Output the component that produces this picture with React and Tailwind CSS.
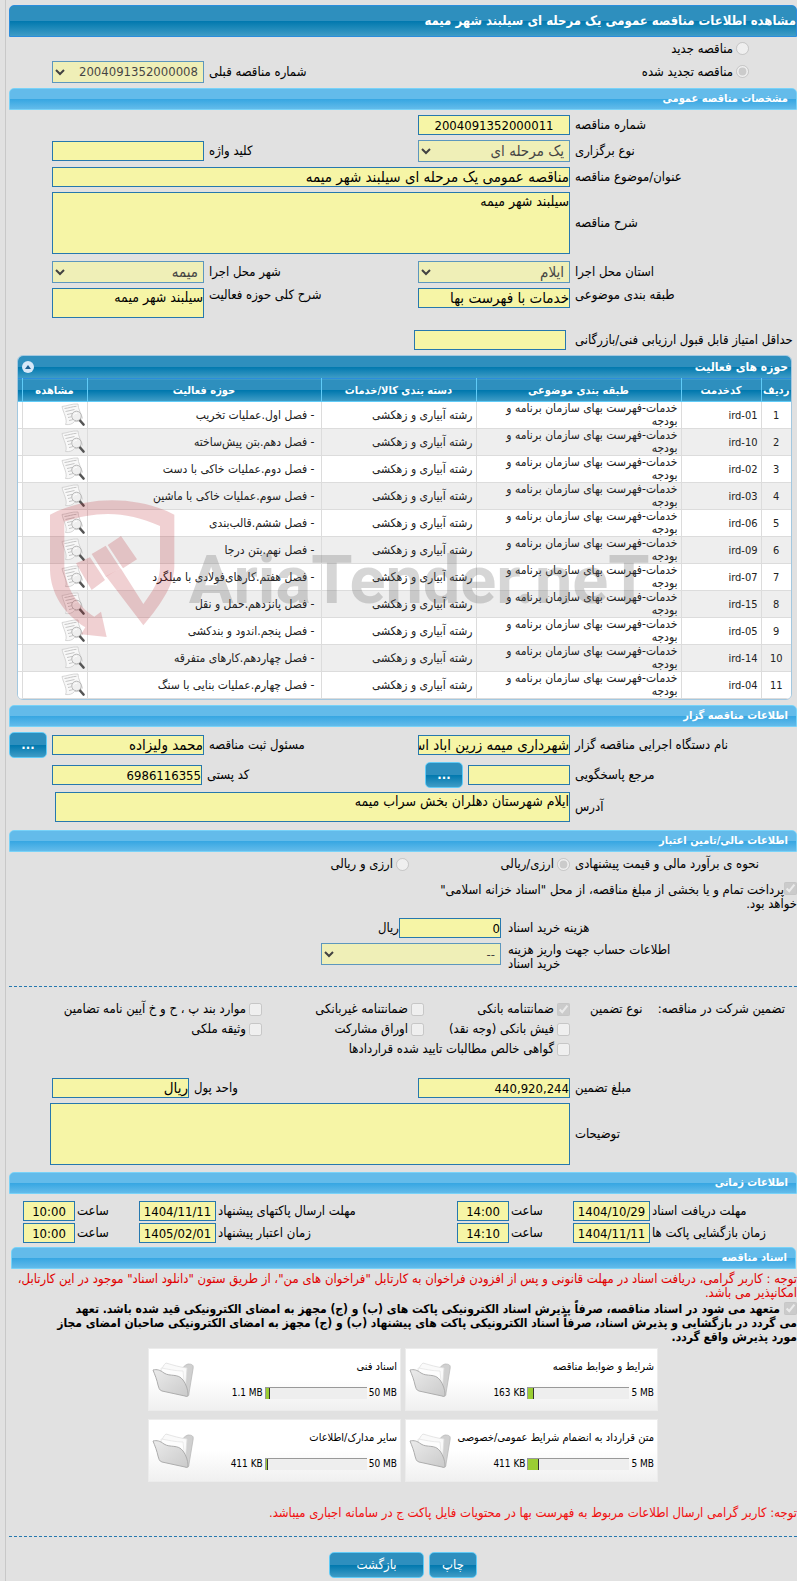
import React from "react";
import clsx from "clsx";

const activities = [
  { code: "ird-01", field: "- فصل اول.عملیات تخریب" },
  { code: "ird-10", field: "- فصل دهم.بتن پیش‌ساخته" },
  { code: "ird-02", field: "- فصل دوم.عملیات خاکی با دست" },
  { code: "ird-03", field: "- فصل سوم.عملیات خاکی با ماشین" },
  { code: "ird-06", field: "- فصل ششم.قالب‌بندی" },
  { code: "ird-09", field: "- فصل نهم.بتن درجا" },
  { code: "ird-07", field: "- فصل هفتم.کارهای‌فولادی با میلگرد" },
  { code: "ird-15", field: "- فصل پانزدهم.حمل و نقل" },
  { code: "ird-05", field: "- فصل پنجم.اندود و بندکشی" },
  { code: "ird-14", field: "- فصل چهاردهم.کارهای متفرقه" },
  { code: "ird-04", field: "- فصل چهارم.عملیات بنایی با سنگ" },
];

const documents = [
  { title: "شرایط و ضوابط مناقصه", used: "163 KB", max: "5 MB", percent: 5 },
  { title: "اسناد فنی", used: "1.1 MB", max: "50 MB", percent: 4 },
  { title: "متن قرارداد به انضمام شرایط عمومی/خصوصی", used: "411 KB", max: "5 MB", percent: 10 },
  { title: "سایر مدارک/اطلاعات", used: "411 KB", max: "50 MB", percent: 2 },
];

const guarantees = [
  [
    { id: "g-bank", label: "ضمانتنامه بانکی", checked: true },
    { id: "g-nonbank", label: "ضمانتنامه غیربانکی" },
    { id: "g-other", label: "موارد بند پ ، ح و خ آیین نامه تضامین" },
  ],
  [
    { id: "g-cash", label: "فیش بانکی (وجه نقد)" },
    { id: "g-bonds", label: "اوراق مشارکت" },
    { id: "g-estate", label: "وثیقه ملکی" },
  ],
  [{ id: "g-claims", label: "گواهی خالص مطالبات تایید شده قراردادها" }],
];

const dates = [
  ["مهلت دریافت اسناد", "1404/10/29", "14:00", "مهلت ارسال پاکتهای پیشنهاد", "1404/11/11", "10:00"],
  ["زمان بازگشایی پاکت ها", "1404/11/11", "14:10", "زمان اعتبار پیشنهاد", "1405/02/01", "10:00"],
];

const darkBar = "bg-[linear-gradient(#2e8fbe_50%,#0078ae_50%,#3f9cc6)]";
const lightBar = "bg-[linear-gradient(#63bbea_50%,#36a6e2_50%,#63bbea)]";

function Section({ title, className }) {
  return (
    <h2
      className={clsx(
        "flex h-[22px] items-center rounded-t-[5px] border border-[#78d2f8] pr-2 text-[11px] leading-[14px] font-bold text-white",
        lightBar,
        className
      )}
    >
      {title}
    </h2>
  );
}

// words are set larger than numbers
function Box({ className, words, ...props }) {
  return (
    <input
      type="text"
      readOnly
      className={clsx(
        "h-5 min-w-0 border border-[#2678ae] bg-[#f6f5a6] leading-[16px]",
        words ? "text-[15px]" : "text-[13px]",
        className
      )}
      {...props}
    />
  );
}

function Area({ className, ...props }) {
  return (
    <textarea
      readOnly
      className={clsx(
        "block min-w-0 resize-none border border-[#2678ae] bg-[#f6f5a6] text-sm leading-[16px]",
        className
      )}
      {...props}
    />
  );
}

function Dropdown({ id, value, className, words }) {
  return (
    <select
      id={id}
      disabled
      className={clsx(
        "h-[22px] shrink-0 border border-[#2678ae] bg-[#f6f5a6] px-px leading-[16px] opacity-70",
        words ? "text-[15px]" : "text-[13px]",
        className
      )}
    >
      <option>{value}</option>
    </select>
  );
}

function Row({ children, tail = "w-[38px]", className }) {
  return (
    <div className={clsx("flex items-center gap-[5px]", className)}>
      {children}
      <div className={clsx("shrink-0", tail)} />
    </div>
  );
}

function MainLabel({ htmlFor, children }) {
  return (
    <label htmlFor={htmlFor} className="w-[222px] shrink-0 text-left">
      {children}
    </label>
  );
}

function SideLabel({ htmlFor, children }) {
  return (
    <label htmlFor={htmlFor} className="min-w-0 flex-1 text-left">
      {children}
    </label>
  );
}

function BlueButton({ children, className, ...props }) {
  return (
    <button
      type="button"
      className={clsx(
        "h-[26px] shrink-0 rounded-[5px] border border-[#60cbf7] text-[13px] leading-[16px] text-white",
        darkBar,
        className
      )}
      {...props}
    >
      {children}
    </button>
  );
}

function Choice({ type = "checkbox", id, name, label, checked, className }) {
  return (
    <div className={clsx("flex items-center gap-[3px]", className)}>
      <input
        type={type}
        id={id}
        name={name}
        disabled
        defaultChecked={checked}
        className="size-[13px] shrink-0"
      />
      <label htmlFor={id}>{label}</label>
    </div>
  );
}

function ViewIcon() {
  return (
    <svg viewBox="0 0 24 24" className="size-6" aria-hidden="true">
      <path
        d="M1 3.500C6 3 11 .5 17 1c0 5 3 9 4.500 14-2 3-5 4-8 3.500-2 2.500-5 3.500-9 3C7 17 2 9 1 3.500z"
        fill="#f8f8f8"
        stroke="#cdcdcd"
        strokeWidth="0.8"
      />
      <path
        d="M3.500 5.500c4-.3 8-2 12-2.200M4.500 8.500c3-.3 6-1.500 9-2M6 11.500c2-.2 3-.7 5-1.200M7 14.500c1-.1 2-.4 3-.7M8 17.500c1.500-.2 3-.6 4-1"
        fill="none"
        stroke="#c0c0c0"
        strokeWidth="0.9"
      />
      <path d="m19 17.500 3.500 4" stroke="#555" strokeWidth="2.600" strokeLinecap="round" />
      <circle cx="15.500" cy="13" r="4.800" fill="#efefef" stroke="#b0b0b0" strokeWidth="0.9" />
      <path d="M12.500 12.500c.5-1.700 2-2.500 3.600-2.200" fill="none" stroke="#fff" />
    </svg>
  );
}

function FolderIcon() {
  return (
    <svg viewBox="0 0 42 37" className="h-[37px] w-[42px] shrink-0" aria-hidden="true">
      <defs>
        <linearGradient id="folder-front" x1="0" y1="0" x2="1" y2="1">
          <stop offset="0" stopColor="#ebebeb" />
          <stop offset="1" stopColor="#cacaca" />
        </linearGradient>
      </defs>
      <path
        d="M28 8c3 0 4-4 8-5 4 0 6 1 5 5l-4 24c0 3-1 4-3 3l-5-3z"
        fill="#d0d0d0"
        stroke="#bababa"
        strokeWidth="0.8"
      />
      <path d="M9 9c2-2 2-5 5-7 7 2 13 4 21 5l-2 24-20-6z" fill="#fafafa" stroke="#dedede" strokeWidth="0.8" />
      <path d="M9 7c7 1 14 3 22 3l2 20-22-8z" fill="#fdfdfd" stroke="#e6e6e6" strokeWidth="0.8" />
      <path
        d="M1 9c4-1 7 0 11 3 6 4 14 0 19 7 3 4 5 10 5 14 0 2-1 3-3 2L10 30c-3-1-3-3-4-6-1-5-3-10-5-15z"
        fill="url(#folder-front)"
        stroke="#adadad"
      />
    </svg>
  );
}

function Watermark() {
  return (
    <svg
      viewBox="150 444 1800 450"
      className="pointer-events-none absolute top-[142px] left-8 h-[150px] w-[600px]"
      aria-hidden="true"
    >
      <g fill="#b4141e" fillOpacity="0.2">
        <path
          fillRule="evenodd"
          d="M150 494C260 436 412 436 523 494V650C522 700 490 755 430 826L318 679 362 655 430 762C460 720 480 690 480 650V528C380 482 290 482 193 515V650C195 710 235 770 283 800L303 785 320 861 243 853 256 832C190 790 152 730 150 660Z"
        />
        <path d="m323 585 40-27 48 70-42 27zM275 612l42-25 44 68-43 25zM228 640l42-18 45 68-40 30z" />
      </g>
      <text
        x="566"
        y="760"
        direction="ltr"
        fontFamily="Roboto, sans-serif"
        fontWeight="700"
        fontSize="200"
        fill="#5a5a5a"
        fillOpacity="0.25"
      >
        AriaTender.neT
      </text>
    </svg>
  );
}

function ActivityTable() {
  const head = "border-l border-[#60cbf7] p-0 font-bold";
  const cell = "border-l border-[#dcdcdc] py-0";
  return (
    <div className="relative mr-[5px] ml-2 overflow-hidden rounded-[6px] border border-[#a3c8e0] bg-white">
      <div className={clsx("flex h-[22px] items-center justify-between pr-[3px] pl-1 text-white", darkBar)}>
        <h3 className="text-xs font-bold">حوزه های فعالیت</h3>
        <button type="button" aria-label="بستن" className="flex size-3 items-center justify-center rounded-full bg-[#d6e8f8]">
          <svg viewBox="0 0 8 4" className="h-1 w-2">
            <path d="M1 4 4 0l3 4z" fill="#1b5f92" />
          </svg>
        </button>
      </div>
      <table className="w-full table-fixed border-collapse text-xs leading-[13px] text-[#222]">
        <thead>
          <tr className={clsx("h-[23px] border-t border-b border-t-[#2b8ddc] border-b-[#60cbf7] text-[11px] text-white", darkBar)}>
            <th className={clsx(head, "w-[30px]")}>ردیف</th>
            <th className={clsx(head, "w-20")}>کدخدمت</th>
            <th className={clsx(head, "w-[205px]")}>طبقه بندی موضوعی</th>
            <th className={clsx(head, "w-[155px]")}>دسته بندی کالا/خدمات</th>
            <th className={head}>حوزه فعالیت</th>
            <th className={clsx(head, "w-[65px]")}>مشاهده</th>
            <th className="w-1 p-0" aria-hidden="true" />
          </tr>
        </thead>
        <tbody>
          {activities.map((item, i) => (
            <tr key={item.code} className="h-[27px] border-b border-[#dcdcdc] odd:bg-white even:bg-[#eee]">
              <td className={clsx(cell, "px-0 text-center text-[11px]")}>{i + 1}</td>
              <td className={clsx(cell, "px-[3px] text-[11px]")}>
                <bdi>{item.code}</bdi>
              </td>
              <td className={clsx(cell, "pr-[3px] pl-4")}>خدمات-فهرست بهای سازمان برنامه و بودجه</td>
              <td className={clsx(cell, "px-[3px]")}>رشته آبیاری و زهکشی</td>
              <td className={clsx(cell, "px-[6px]")}>{item.field}</td>
              <td className={clsx(cell, "px-[2px]")}>
                <ViewIcon />
              </td>
              <td className="bg-white p-0" />
            </tr>
          ))}
        </tbody>
      </table>
      <Watermark />
    </div>
  );
}

function DocumentCard({ doc }) {
  return (
    <div className="flex h-[63px] items-center justify-between border border-[#ececec] bg-[linear-gradient(#fff_50%,#f0f0f0)] px-[3px]">
      <div className="text-[10px] leading-[14px]">
        <div className="text-[11px] whitespace-nowrap">{doc.title}</div>
        <div className="mt-3 flex items-center gap-[2px]">
          <bdi>{doc.max}</bdi>
          <div className="flex h-3 w-[102px] justify-end border-t border-l border-[#999] bg-[#eee]">
            <div className="border-r border-[#333] bg-[#9acd32]" style={{ width: `${doc.percent}%` }} />
          </div>
          <bdi>{doc.used}</bdi>
        </div>
      </div>
      <FolderIcon />
    </div>
  );
}

export default function App() {
  return (
    <div
      dir="rtl"
      className="min-h-screen overflow-x-hidden bg-[#e1e1e1] pl-[5px] text-[13px] leading-[14px] text-black [font-family:'DejaVu_Sans_Condensed','DejaVu_Sans',sans-serif]"
    >
      <main className="min-h-screen border-l border-[#c8c8c8] pt-[5px] pb-[5px] pl-[3px]">
        <h1
          className={clsx(
            "flex h-8 items-center rounded-t-[5px] border border-[#2b8ddc] text-[13px] font-bold text-white",
            darkBar
          )}
        >
          مشاهده اطلاعات مناقصه عمومی یک مرحله ای سیلبند شهر میمه
        </h1>

        <Choice type="radio" id="t-new" name="tender" label="مناقصه جدید" className="h-[23px] pr-12" />
        <Row className="h-[23px]">
          <Choice type="radio" id="t-renewed" name="tender" label="مناقصه تجدید شده" checked className="pr-12" />
          <SideLabel htmlFor="prev">شماره مناقصه قبلی</SideLabel>
          <Dropdown id="prev" value="2004091352000008" className="w-[152px]" />
        </Row>

        <Section title="مشخصات مناقصه عمومی" className="mt-[5px]" />
        <div className="flex flex-col gap-[5px] py-[5px]">
          <Row>
            <MainLabel htmlFor="number">شماره مناقصه</MainLabel>
            <Box id="number" defaultValue="2004091352000011" className="w-[152px] text-center" />
          </Row>
          <Row>
            <MainLabel htmlFor="kind">نوع برگزاری</MainLabel>
            <Dropdown words id="kind" value="یک مرحله ای" className="w-[152px]" />
            <SideLabel htmlFor="keyword">کلید واژه</SideLabel>
            <Box id="keyword" className="w-[152px]" />
          </Row>
          <Row>
            <MainLabel htmlFor="subject">عنوان/موضوع مناقصه</MainLabel>
            <Box words id="subject" defaultValue="مناقصه عمومی یک مرحله ای سیلبند شهر میمه" className="flex-1" />
          </Row>
          <Row className="pb-[2px]">
            <MainLabel htmlFor="description">شرح مناقصه</MainLabel>
            <Area id="description" defaultValue="سیلبند شهر میمه" className="h-[62px] flex-1" />
          </Row>
          <Row>
            <MainLabel htmlFor="province">استان محل اجرا</MainLabel>
            <Dropdown words id="province" value="ایلام" className="w-[152px]" />
            <SideLabel htmlFor="city">شهر محل اجرا</SideLabel>
            <Dropdown words id="city" value="میمه" className="w-[152px]" />
          </Row>
          <Row className="items-start! pb-[7px]">
            <MainLabel htmlFor="category">طبقه بندی موضوعی</MainLabel>
            <Box words id="category" defaultValue="خدمات با فهرست بها" className="w-[152px]" />
            <SideLabel htmlFor="scope">شرح کلی حوزه فعالیت</SideLabel>
            <Area id="scope" defaultValue="سیلبند شهر میمه" className="h-[30px] w-[152px]" />
          </Row>
          <Row>
            <MainLabel htmlFor="score">حداقل امتیاز قابل قبول ارزیابی فنی/بازرگانی</MainLabel>
            <Box id="score" className="mr-1 w-[152px]" />
          </Row>
          <ActivityTable />
        </div>

        <Section title="اطلاعات مناقصه گزار" />
        <div className="flex flex-col gap-1 pt-[5px] pb-2">
          <Row tail="hidden">
            <MainLabel htmlFor="agency">نام دستگاه اجرایی مناقصه گزار</MainLabel>
            <Box words id="agency" defaultValue="شهرداری میمه زرین اباد استان ایلام" className="w-[152px]" />
            <SideLabel htmlFor="registrar">مسئول ثبت مناقصه</SideLabel>
            <Box words id="registrar" defaultValue="محمد ولیزاده" className="w-[152px]" />
            <BlueButton className="w-[38px] font-bold" aria-label="انتخاب مسئول">
              ...
            </BlueButton>
          </Row>
          <Row>
            <MainLabel htmlFor="contact">مرجع پاسخگویی</MainLabel>
            <Box id="contact" className="w-[102px]" />
            <BlueButton className="w-[38px] font-bold" aria-label="انتخاب مرجع">
              ...
            </BlueButton>
            <SideLabel htmlFor="postal">کد پستی</SideLabel>
            <Box id="postal" defaultValue="6986116355" className="w-[150px]" />
          </Row>
          <Row tail="w-[41px]">
            <MainLabel htmlFor="address">آدرس</MainLabel>
            <Area id="address" defaultValue="ایلام شهرستان دهلران بخش سراب میمه" className="h-[30px] flex-1" />
          </Row>
        </div>

        <Section title="اطلاعات مالی/تامین اعتبار" />
        <div className="flex h-6 items-center gap-[5px]">
          <span className="w-[222px] shrink-0 text-left">نحوه ی برآورد مالی و قیمت پیشنهادی</span>
          <Choice type="radio" id="c-one" name="currency" label="ارزی/ریالی" checked className="w-[156px]" />
          <Choice type="radio" id="c-both" name="currency" label="ارزی و ریالی" />
        </div>
        <div className="mt-[6px]">
          <input type="checkbox" id="treasury" disabled defaultChecked className="size-[13px] align-text-top" />
          <label htmlFor="treasury">
            پرداخت تمام و یا بخشی از مبلغ مناقصه، از محل "اسناد خزانه اسلامی"
            <br />
            خواهد بود.
          </label>
        </div>
        <div className="mt-[7px] flex h-5 items-center">
          <label htmlFor="fee" className="ml-[7px] w-[289px] text-left">
            هزینه خرید اسناد
          </label>
          <Box id="fee" defaultValue="0" className="w-[102px]" />
          <span>ریال</span>
        </div>
        <div className="mt-[5px] mb-[15px] flex items-start">
          <label htmlFor="account" className="ml-[7px] w-[289px] text-left">
            اطلاعات حساب جهت واریز هزینه
            <br />
            خرید اسناد
          </label>
          <Dropdown id="account" value="--" className="w-[180px]" />
        </div>

        <div className="border-t border-dashed border-[#2678ae] pt-3">
          {guarantees.map((line, i) => (
            <div key={i} className="flex h-5 items-center gap-[5px]">
              <div className="flex w-[222px] shrink-0 justify-between pr-3 pl-[15px]">
                {i === 0 && (
                  <>
                    <span>تضمین شرکت در مناقصه:</span>
                    <span>نوع تضمین</span>
                  </>
                )}
              </div>
              {line.map((g, n) => (
                <Choice
                  key={g.id}
                  {...g}
                  className={clsx("whitespace-nowrap", n === 0 && "w-[141px]", n === 1 && "w-[157px]")}
                />
              ))}
            </div>
          ))}
        </div>

        <div className="flex flex-col gap-[5px] pt-[19px] pb-[7px]">
          <Row>
            <MainLabel htmlFor="amount">مبلغ تضمین</MainLabel>
            <Box id="amount" defaultValue="440,920,244" className="w-[152px]" />
            <SideLabel htmlFor="unit">واحد پول</SideLabel>
            <Box words id="unit" defaultValue="ریال" className="w-[137px]" />
          </Row>
          <Row tail="w-9">
            <MainLabel htmlFor="notes">توضیحات</MainLabel>
            <Area id="notes" className="h-[62px] flex-1" />
          </Row>
        </div>

        <Section title="اطلاعات زمانی" />
        <div className="flex flex-col gap-[2px] pt-[7px] pb-1">
          {dates.map(([label1, date1, time1, label2, date2, time2], i) => (
            <div
              key={label1}
              className="grid grid-cols-[145px_77px_60px_52px_minmax(0,1fr)_77px_60px_52px] items-center gap-[2px] pl-[14px] text-left"
            >
              <label htmlFor={`d1-${i}`}>{label1}</label>
              <Box id={`d1-${i}`} defaultValue={date1} className="text-center" />
              <label htmlFor={`t1-${i}`}>ساعت</label>
              <Box id={`t1-${i}`} defaultValue={time1} className="text-center" />
              <label htmlFor={`d2-${i}`}>{label2}</label>
              <Box id={`d2-${i}`} defaultValue={date2} className="text-center" />
              <label htmlFor={`t2-${i}`}>ساعت</label>
              <Box id={`t2-${i}`} defaultValue={time2} className="text-center" />
            </div>
          ))}
        </div>

        <Section title="اسناد مناقصه" className="mr-px ml-[2px]" />
        <p className="mt-[3px] text-[#e00000]">
          توجه : کاربر گرامی، دریافت اسناد در مهلت قانونی و پس از افزودن فراخوان به کارتابل "فراخوان های من"، از طریق ستون "دانلود اسناد" موجود در این کارتابل،
          <br />
          امکانپذیر می باشد.
        </p>
        <div className="mt-[2px] text-xs leading-[14px] font-bold">
          <input type="checkbox" id="commit" disabled defaultChecked className="ml-1 size-[13px] align-text-top" />
          <label htmlFor="commit">
            متعهد می شود در اسناد مناقصه، صرفاً پذیرش اسناد الکترونیکی پاکت های (ب) و (ج) مجهز به امضای الکترونیکی قید شده باشد. تعهد
            <br />
            می گردد در بازگشایی و پذیرش اسناد، صرفاً اسناد الکترونیکی پاکت های پیشنهاد (ب) و (ج) مجهز به امضای الکترونیکی صاحبان امضای مجاز
            <br />
            مورد پذیرش واقع گردد.
          </label>
        </div>

        <div className="mx-auto mt-1 grid w-[510px] grid-cols-2 gap-x-1 gap-y-2">
          {documents.map((doc) => (
            <DocumentCard key={doc.title} doc={doc} />
          ))}
        </div>

        <p className="mt-6 text-[#f01010]">
          توجه: کاربر گرامی ارسال اطلاعات مربوط به فهرست بها در محتویات فایل پاکت ج در سامانه اجباری میباشد.
        </p>

        <div className="mt-4 flex justify-center gap-[5px] border-t border-dashed border-[#2678ae] pt-[15px]">
          <BlueButton className="w-12">چاپ</BlueButton>
          <BlueButton className="w-[95px]">بازگشت</BlueButton>
        </div>
      </main>
    </div>
  );
}
